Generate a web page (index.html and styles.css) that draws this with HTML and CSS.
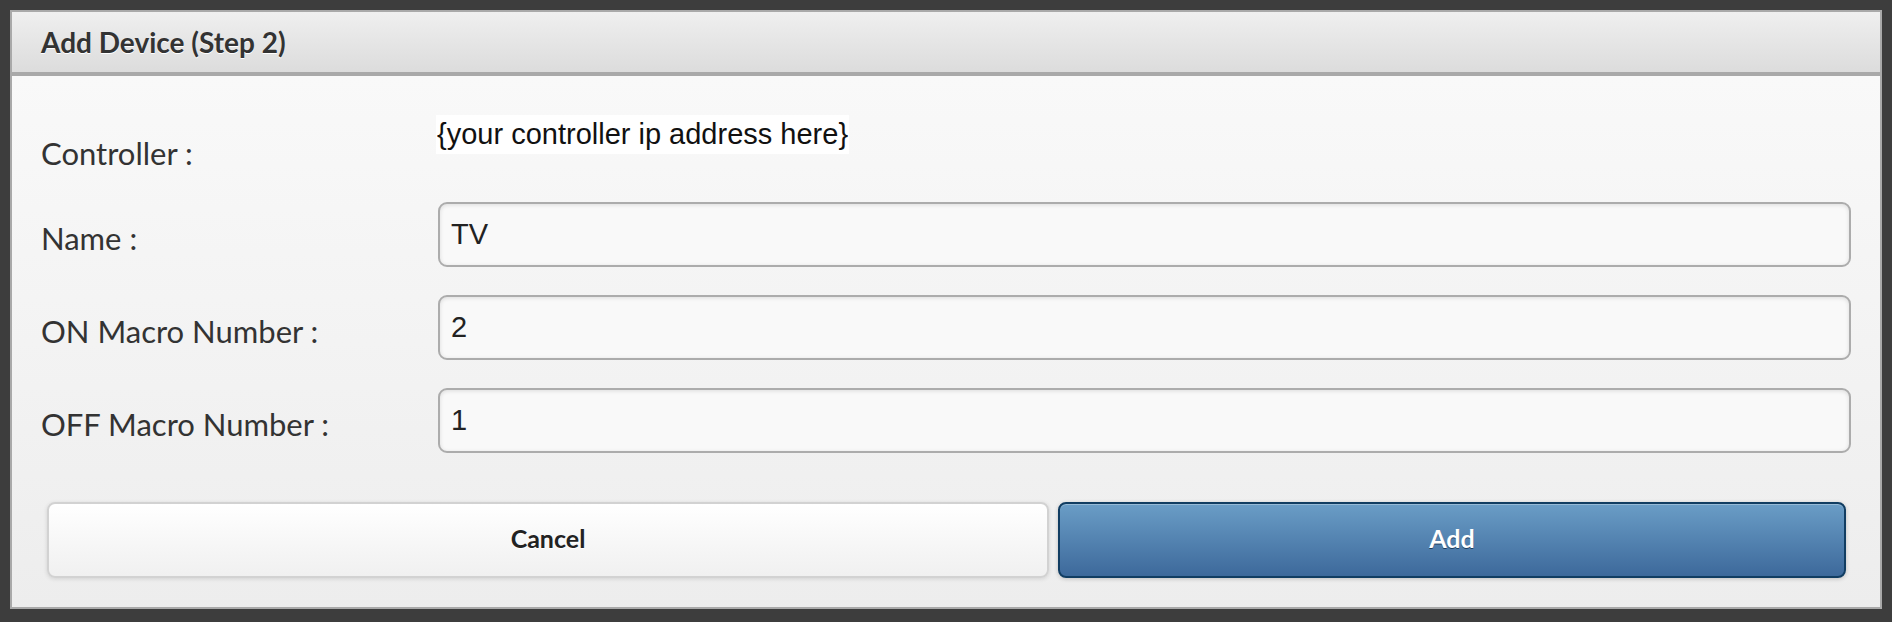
FILE: index.html
```html
<!DOCTYPE html>
<html lang="en">
<head>
<meta charset="utf-8">
<title>Add Device (Step 2)</title>
<link rel="stylesheet" href="styles.css">
</head>
<body>
<div class="dialog">
  <div class="dialog-header">
    <h1 class="dialog-title">Add Device (Step 2)</h1>
  </div>
  <div class="dialog-content">
    <div class="row row-static">
      <label class="row-label">Controller :</label>
      <div class="row-value"><span class="static-value">{your controller ip address here}</span></div>
    </div>
    <div class="row">
      <label class="row-label" for="name">Name :</label>
      <input class="text-input" id="name" type="text" value="TV">
    </div>
    <div class="row">
      <label class="row-label" for="on">ON Macro Number :</label>
      <input class="text-input" id="on" type="text" value="2">
    </div>
    <div class="row">
      <label class="row-label" for="off">OFF Macro Number :</label>
      <input class="text-input" id="off" type="text" value="1">
    </div>
    <div class="actions">
      <button class="btn btn-cancel" type="button">Cancel</button>
      <button class="btn btn-add" type="button">Add</button>
    </div>
  </div>
</div>
</body>
</html>
```

FILE: styles.css
```css
html, body {
  margin: 0;
  padding: 0;
}

body {
  background: #3d3d3d;
  padding: 10px;
  height: 622px;
  box-sizing: border-box;
  font-family: "Lato", "Noto Sans", sans-serif;
}

.dialog {
  width: 1872px;
  border: 2px solid #a9a9a9;
  box-sizing: border-box;
  display: flex;
  flex-direction: column;
}

.dialog-header {
  height: 60px;
  background: linear-gradient(#efefef, #dcdcdc);
  border-bottom: 4px solid #a9a9a9;
  padding: 0 29px;
}

.dialog-title {
  margin: 0;
  font-family: "Lato", "Noto Sans", sans-serif;
  font-weight: 700;
  font-size: 28px;
  line-height: 60px;
  color: #333;
  text-shadow: 0 1px 0 #fff;
}

.dialog-content {
  background: linear-gradient(#f9f9f9, #ededed);
  padding: 39px 29px 29px;
  display: flex;
  flex-direction: column;
}

.row {
  display: grid;
  grid-template-columns: 397px 1fr;
  align-items: center;
  margin-bottom: 28px;
}

.row-static {
  align-items: start;
  margin-bottom: 29px;
}

.row-label {
  font-size: 31px;
  line-height: 40px;
  padding-top: 6px;
  color: #333;
  font-weight: 400;
}

.row-static .row-label {
  padding-top: 18px;
}

.row-value {
  margin-left: -2px;
}

.static-value {
  display: inline-block;
  background: #fff;
  font-family: "Liberation Sans", Arial, sans-serif;
  font-size: 29px;
  line-height: 39px;
  color: #111;
  padding: 0 1px;
}

.text-input {
  height: 65px;
  box-sizing: border-box;
  border: 2px solid #acacac;
  border-radius: 9px;
  background: #f9f9f9;
  box-shadow: inset 0 1px 4px rgba(0, 0, 0, 0.12);
  padding: 0 11px;
  font-family: "Liberation Sans", Arial, sans-serif;
  font-size: 29px;
  color: #222;
  outline: none;
  width: 100%;
}

.actions {
  display: flex;
  gap: 9px;
  padding: 21px 5px 0 6px;
}

.btn {
  height: 76px;
  border-radius: 8px;
  box-sizing: border-box;
  font-family: "Lato", "Noto Sans", sans-serif;
  font-weight: 700;
  font-size: 25px;
  padding: 0 0 4px;
  cursor: pointer;
}

.btn-cancel {
  width: 1002px;
  flex: none;
  background: linear-gradient(#ffffff, #f0f0f0);
  border: 2px solid #d2d2d2;
  color: #222;
  text-shadow: 0 1px 0 #fff;
  box-shadow: 0 1px 4px rgba(0, 0, 0, 0.12);
}

.btn-add {
  flex: 1;
  background: linear-gradient(#6a9dc6, #3d699b);
  border: 2px solid #113d62;
  color: #fff;
  text-shadow: 0 1px 0 #1d3d5e;
  box-shadow: inset 0 1px 0 rgba(255, 255, 255, 0.3), 0 1px 4px rgba(0, 0, 0, 0.2);
}
```
